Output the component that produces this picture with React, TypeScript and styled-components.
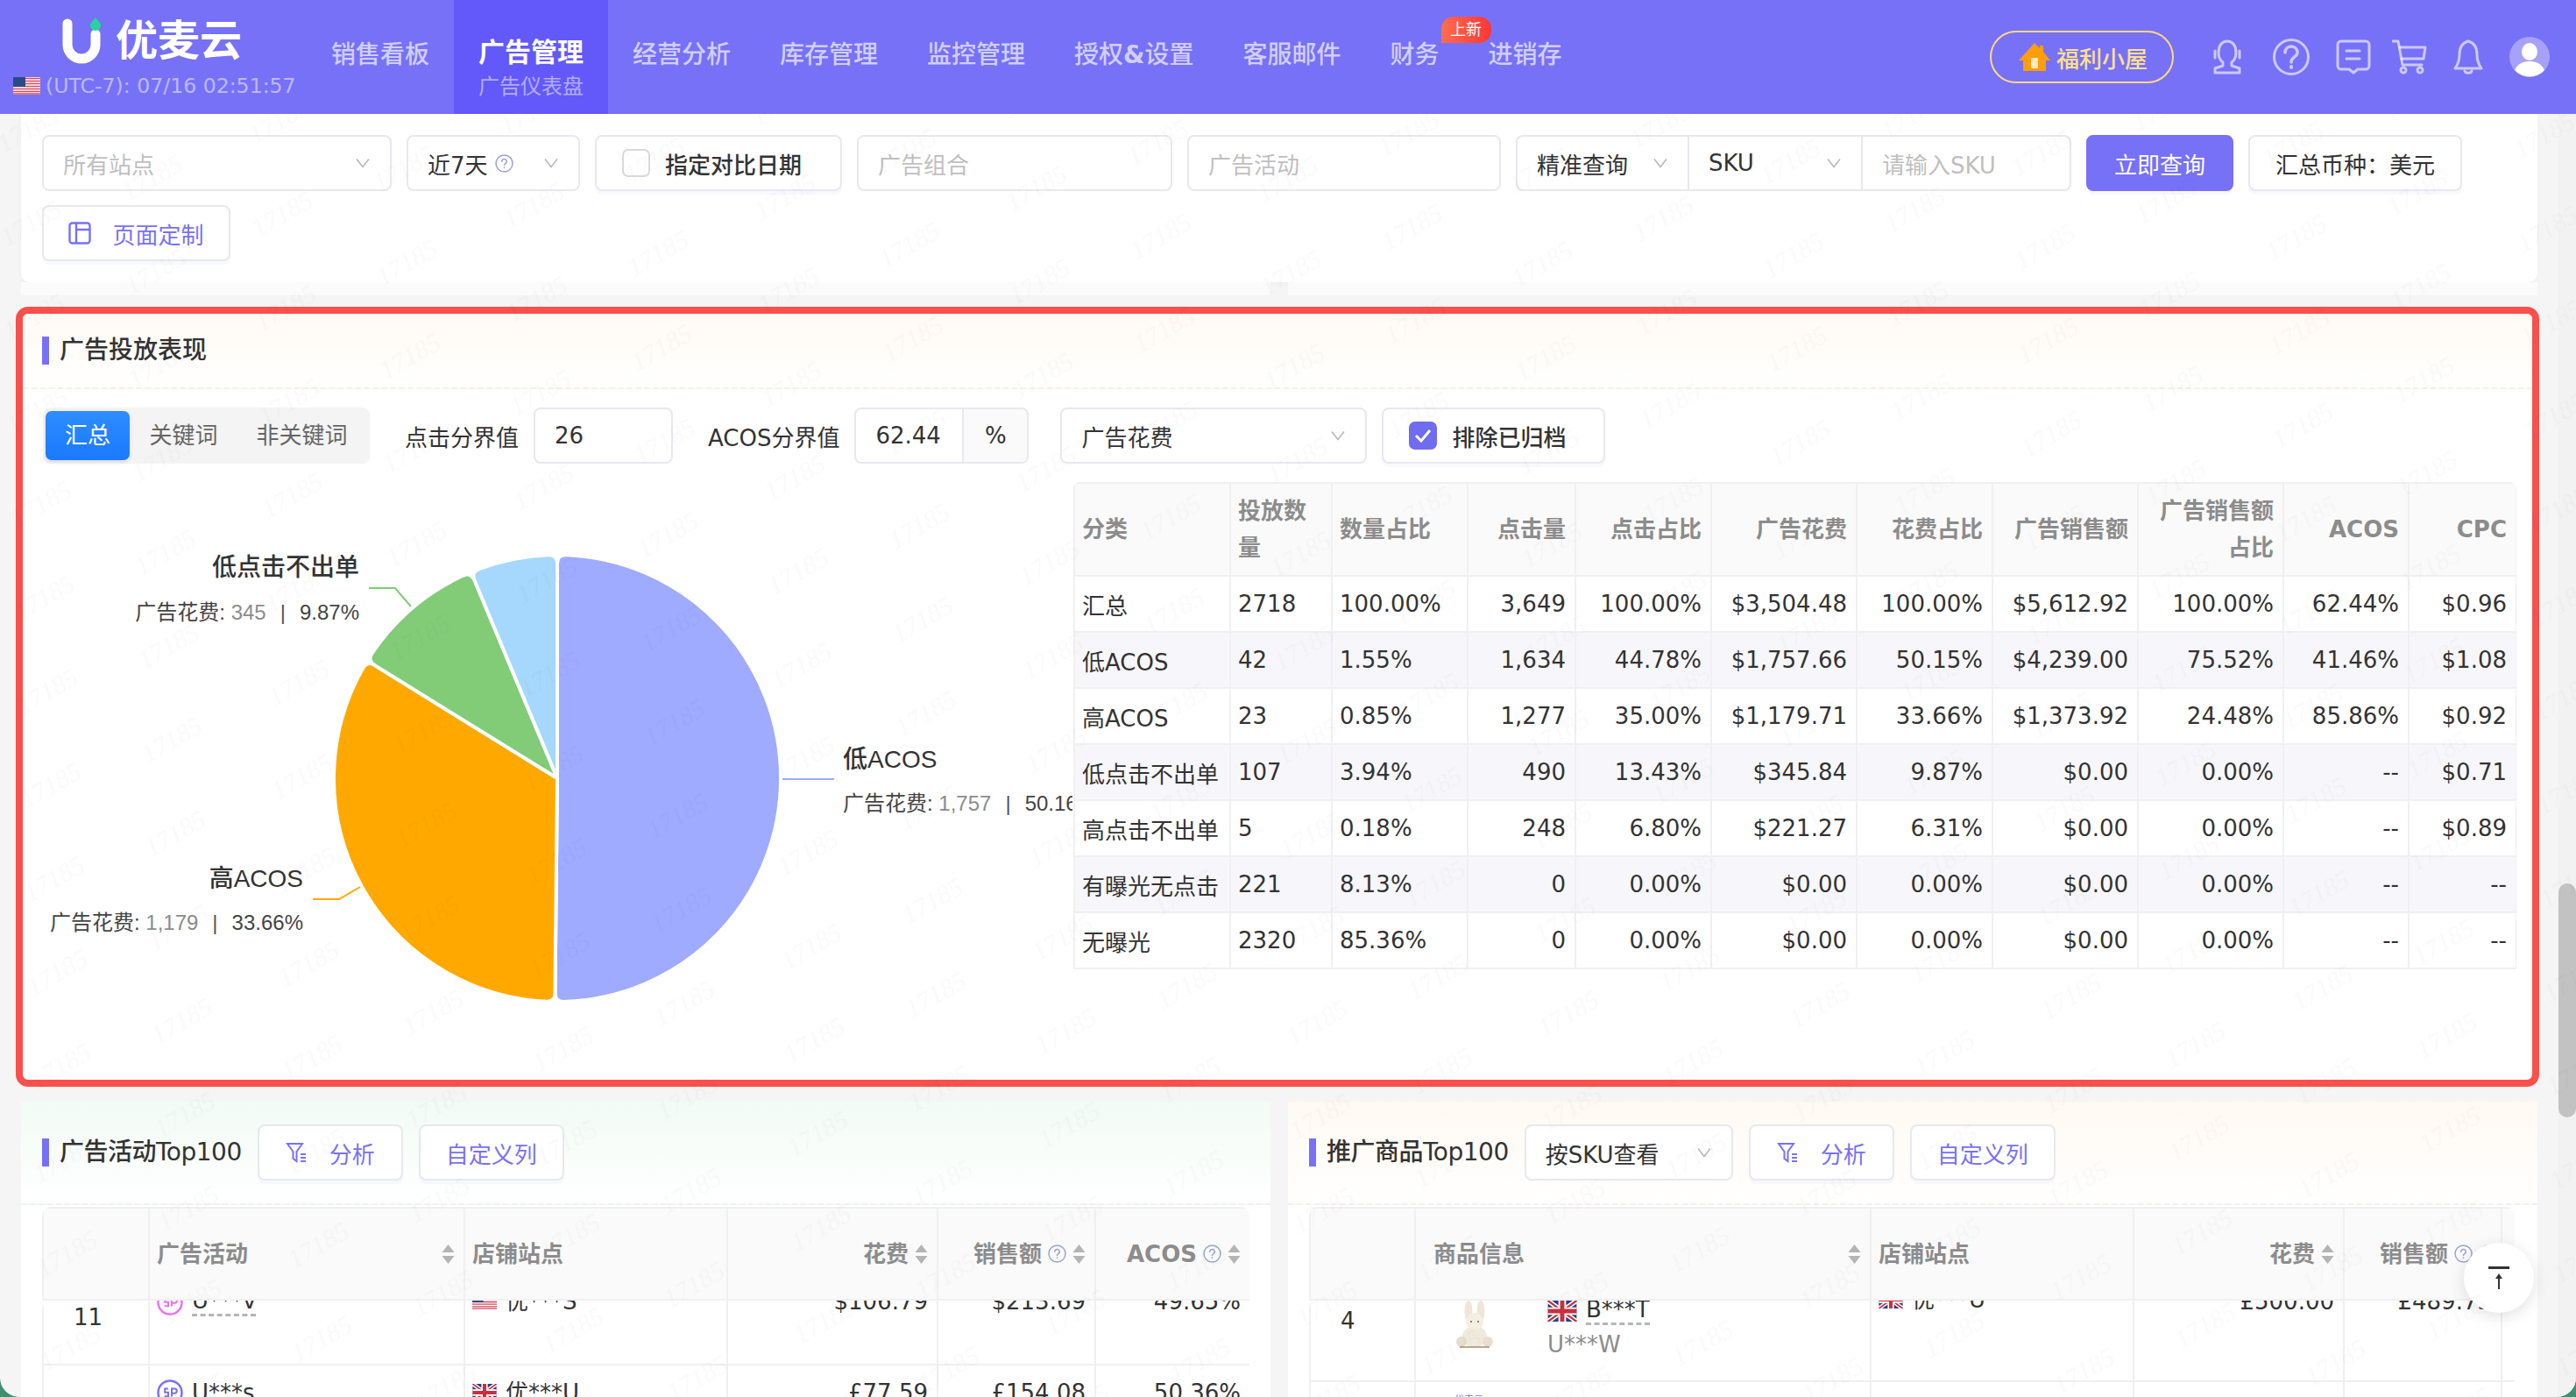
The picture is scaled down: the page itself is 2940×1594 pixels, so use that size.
import React from "react"
import styled, { createGlobalStyle } from "styled-components"

const PURPLE = "#7771f8"
const BORDER = "#e8e8ee"
const LINE = "#f0f0f2"

const GlobalStyle = createGlobalStyle`
  html, body {
    margin: 0;
    padding: 0;
    width: 2940px;
    height: 1594px;
    overflow: hidden;
    background: #3f8f70;
  }
  * { box-sizing: border-box; }
  body {
    font-family: "DejaVu Sans", "Noto Sans CJK SC", sans-serif;
    font-size: 26px;
    color: #333;
  }
`

const Page = styled.div`
  display: flex;
  flex-direction: column;
  width: 2940px;
  height: 1594px;
  overflow: hidden;
  background: #f5f5f6;
  border-radius: 0 0 22px 22px;
`

/* header */
const Header = styled.header`
  display: flex;
  flex: none;
  height: 130px;
  background: ${PURPLE};
  color: #fff;
`

const Brand = styled.div`
  display: flex;
  flex-direction: column;
  flex: none;
  width: 350px;
  padding: 14px 0 0 15px;
`

const LogoRow = styled.div`
  display: flex;
  align-items: center;
  gap: 15px;
  height: 64px;
  margin-left: 56px;
`

const LogoText = styled.span`
  font-size: 48px;
  font-weight: 700;
  line-height: 1;
`

const TimeRow = styled.div`
  display: flex;
  align-items: center;
  gap: 6px;
  margin-top: 6px;
  font-size: 23.6px;
  color: rgba(255, 255, 255, 0.5);
  white-space: nowrap;
`

const Nav = styled.nav`
  display: flex;
`

const NavItem = styled.div<{ $active?: boolean }>`
  position: relative;
  display: flex;
  flex-direction: column;
  align-items: center;
  padding: ${(p) => (p.$active ? "41px" : "44px")} 28px 0;
  background: ${(p) => (p.$active ? "#6359fa" : "transparent")};
  font-size: ${(p) => (p.$active ? "30px" : "28px")};
  font-weight: ${(p) => (p.$active ? 700 : 500)};
  line-height: 38px;
  color: ${(p) => (p.$active ? "#fff" : "rgba(255,255,255,.68)")};
  white-space: nowrap;
`

const NavSub = styled.span`
  margin-top: 4px;
  font-size: 24px;
  font-weight: 400;
  line-height: 32px;
  color: rgba(255, 255, 255, 0.5);
`

const NavLabel = styled.span`
  display: flex;
  align-items: baseline;
`

const Amp = styled.span`
  font-weight: 700;
`

const NewBadge = styled.span`
  position: absolute;
  top: 19px;
  left: 86px;
  width: 57px;
  height: 30px;
  border-radius: 14px 14px 14px 0;
  background: linear-gradient(90deg, #ff6d4f, #ff3636);
  color: #fff;
  font-size: 18px;
  font-weight: 400;
  line-height: 30px;
  text-align: center;
`

const HeaderRight = styled.div`
  display: flex;
  align-items: center;
  gap: 30px;
  margin-left: auto;
  padding: 0 30px 0 0;
  height: 130px;
`

const WelfarePill = styled.div`
  display: flex;
  align-items: center;
  gap: 7px;
  width: 210px;
  height: 60px;
  margin-right: 14px;
  padding-left: 31px;
  border: 2px solid #ffd97a;
  border-radius: 30px;
  color: #ffe08a;
  font-weight: 500;
`

const HeaderIcon = styled.svg<{ $pull?: number }>`
  flex: none;
  display: block;
  margin-right: ${(p) => p.$pull ?? 0}px;
  fill: none;
  stroke: rgba(255, 255, 255, 0.62);
  stroke-width: 3;
  stroke-linecap: round;
  stroke-linejoin: round;
`

/* page body */
const Body = styled.div`
  position: relative;
  display: flex;
  flex: 1;
  min-height: 0;
`

const Main = styled.main`
  flex: none;
  width: 2920px;
  padding-left: 24px;
`

const ScrollTrack = styled.div`
  flex: none;
  width: 20px;
  background: #f2f2f3;
`

const ScrollThumb = styled.div`
  width: 20px;
  height: 267px;
  margin-top: 878px;
  border-radius: 10px;
  background: #c2c2c2;
`

const WatermarkLayer = styled.svg`
  position: absolute;
  inset: 0;
  width: 100%;
  height: 100%;
  pointer-events: none;
`

const WatermarkText = styled.text`
  font-family: "Liberation Serif", serif;
  font-style: italic;
  font-size: 30px;
  fill: rgba(0, 0, 0, 0.018);
`

/* filter card */
const FilterCard = styled.section`
  display: flex;
  flex-wrap: wrap;
  align-content: flex-start;
  gap: 16px 17px;
  width: 2872px;
  height: 192px;
  padding: 24px 24px 0;
  background: #fff;
  border-radius: 0 0 10px 10px;
  box-shadow: 0 2px 6px rgba(0, 0, 0, 0.03);
`

const Field = styled.div<{ $w: number; $muted?: boolean }>`
  display: flex;
  align-items: center;
  flex: none;
  width: ${(p) => p.$w}px;
  height: 64px;
  padding: 0 22px;
  background: #fff;
  border: 2px solid ${BORDER};
  border-radius: 8px;
  color: ${(p) => (p.$muted ? "#bfbfbf" : "#333")};
  white-space: nowrap;
`

const FieldGroup = styled.div`
  display: flex;
  flex: none;

  & > div {
    border-radius: 0;
    border-left-width: 0;
  }
  & > div:first-child {
    border-radius: 8px 0 0 8px;
    border-left-width: 2px;
  }
  & > div:last-child {
    border-radius: 0 8px 8px 0;
  }
`

const Chevron = styled.svg`
  flex: none;
  margin-left: auto;
  fill: none;
  stroke: #b8b8b8;
  stroke-width: 1.6;
`

const HelpGap = styled.span`
  width: 8px;
`

const Button = styled.button<{ $w: number; $primary?: boolean; $accent?: boolean }>`
  display: flex;
  align-items: center;
  justify-content: center;
  gap: 24px;
  flex: none;
  width: ${(p) => p.$w}px;
  height: 64px;
  padding: 0;
  font: inherit;
  background: ${(p) => (p.$primary ? PURPLE : "#fff")};
  border: 2px solid ${(p) => (p.$primary ? PURPLE : BORDER)};
  border-radius: 8px;
  box-shadow: 0 4px 0 rgba(119, 113, 248, 0.05);
  color: ${(p) => (p.$primary ? "#fff" : p.$accent ? PURPLE : "#333")};
  white-space: nowrap;
`

const CheckButton = styled(Button)<{ $left?: number }>`
  justify-content: flex-start;
  gap: 17px;
  margin-left: ${(p) => p.$left ?? 0}px;
  padding-left: 29px;
  font-weight: 500;
`

const CheckBox = styled.span<{ $checked?: boolean }>`
  display: flex;
  align-items: center;
  justify-content: center;
  flex: none;
  width: 32px;
  height: 32px;
  border: 2px solid ${(p) => (p.$checked ? "#6f6cf0" : "#d9d9d9")};
  border-radius: 7px;
  background: ${(p) => (p.$checked ? "#6f6cf0" : "#fff")};
`

const Stubs = styled.div`
  display: flex;
  gap: 20px;
  width: 2872px;
  height: 15px;

  & > div {
    flex: 1;
    background: #fbfbfb;
  }
`

/* performance panel */
const RedPanel = styled.section`
  width: 2880px;
  height: 890px;
  margin: 13px 0 17px -6px;
  background: #fff;
  border: 8px solid #f9504c;
  border-radius: 14px;
  overflow: hidden;
`

const TitleBar = styled.div<{ $tint: string; $h: number; $left: number }>`
  display: flex;
  align-items: center;
  gap: 18px;
  height: ${(p) => p.$h}px;
  padding-left: ${(p) => p.$left}px;
  background: linear-gradient(180deg, ${(p) => p.$tint}, #fff);
  border-bottom: 2px dashed ${(p) => (p.$tint === "#f2fbf5" ? "#eef3f0" : "#f5f0ea")};
`

const Title = styled.h2`
  display: flex;
  align-items: center;
  gap: 12px;
  margin: 0;
  font-size: 28px;
  font-weight: 500;
  line-height: 32px;
  white-space: nowrap;

  &::before {
    content: "";
    width: 8px;
    height: 32px;
    background: ${PURPLE};
  }
`

const CardTitle = styled(Title)`
  letter-spacing: -0.5px;
`

const ControlRow = styled.div`
  display: flex;
  align-items: center;
  height: 64px;
  margin: 21px 0 20px 23px;
`

const Segmented = styled.div`
  display: flex;
  align-items: center;
  width: 373px;
  height: 64px;
  padding: 0 3px;
  background: #f4f4f5;
  border-radius: 8px;
`

const Segment = styled.span<{ $active?: boolean; $w: number }>`
  width: ${(p) => p.$w}px;
  height: 56px;
  border-radius: 7px;
  background: ${(p) => (p.$active ? "linear-gradient(180deg,#2e8dff,#1a79ff)" : "transparent")};
  box-shadow: ${(p) => (p.$active ? "0 2px 5px rgba(0,0,0,.12)" : "none")};
  color: ${(p) => (p.$active ? "#fff" : "#666")};
  line-height: 56px;
  text-align: center;
  white-space: nowrap;
`

const ControlLabel = styled.span<{ $left: number }>`
  flex: none;
  margin: 0 17px 0 ${(p) => p.$left}px;
  white-space: nowrap;
`

const AddonInput = styled.div`
  display: flex;
  flex: none;
  width: 199px;
  height: 64px;
  border: 2px solid ${BORDER};
  border-radius: 8px;
  overflow: hidden;
`

const AddonValue = styled.span`
  flex: 1;
  padding-left: 22px;
  line-height: 60px;
`

const AddonUnit = styled.span`
  width: 74px;
  background: #fafafa;
  border-left: 2px solid ${BORDER};
  line-height: 60px;
  text-align: center;
`

const MetricSelect = styled(Field)`
  margin-left: 36px;
`

const SplitRow = styled.div`
  display: flex;
  align-items: flex-start;
`

const ChartSvg = styled.svg`
  flex: none;
  display: block;
`

const PieLabel = styled.text<{ $end?: boolean }>`
  font-family: "Liberation Sans", "Noto Sans CJK SC", sans-serif;
  font-size: 28px;
  font-weight: 500;
  fill: #333;
  text-anchor: ${(p) => (p.$end ? "end" : "start")};
`

const PieSub = styled.text<{ $end?: boolean }>`
  font-family: "Liberation Sans", "Noto Sans CJK SC", sans-serif;
  font-size: 24px;
  fill: #444;
  text-anchor: ${(p) => (p.$end ? "end" : "start")};

  tspan.value {
    fill: #8c8c8c;
  }
  tspan.sep {
    fill: #555;
    font-weight: 300;
  }
`

/* tables */
const TableFrame = styled.div<{ $w: number; $h?: number; $inset?: boolean }>`
  flex: none;
  width: ${(p) => p.$w}px;
  ${(p) => (p.$h ? `height: ${p.$h}px;` : "")}
  ${(p) => (p.$inset ? "padding: 1px;" : "")}
  overflow: hidden;
  border-radius: 10px 10px 0 0;
`

const Table = styled.table<{ $offset?: number }>`
  width: 100%;
  table-layout: fixed;
  border-collapse: collapse;
  ${(p) => (p.$offset ? `margin-top: ${p.$offset}px;` : "")}
`

const Th = styled.th<{ $right?: boolean; $h?: number }>`
  height: ${(p) => p.$h ?? 106}px;
  padding: 0 10px 0 8px;
  background: #fafafa;
  border: 2px solid ${LINE};
  color: #8c8c8c;
  font-weight: 600;
  font-size: 26px;
  line-height: 42px;
  text-align: ${(p) => (p.$right ? "right" : "left")};
  white-space: normal;
`

const HeadInner = styled.div<{ $spread?: boolean; $right?: boolean; $indent?: number }>`
  display: flex;
  align-items: center;
  gap: 7px;
  padding-left: ${(p) => p.$indent ?? 0}px;
  justify-content: ${(p) => (p.$spread ? "space-between" : p.$right ? "flex-end" : "flex-start")};
  white-space: nowrap;
`

const Td = styled.td<{ $right?: boolean; $striped?: boolean }>`
  height: 64px;
  padding: 0 10px 0 8px;
  background: ${(p) => (p.$striped ? "#f7f7fb" : "#fff")};
  border: 2px solid ${LINE};
  text-align: ${(p) => (p.$right ? "right" : "left")};
  white-space: nowrap;
`

const ListCell = styled.td<{ $index?: boolean; $h: number }>`
  height: ${(p) => p.$h}px;
  padding: 0 10px 0 ${(p) => (p.$index ? "34px" : "8px")};
  background: #fff;
  border: 2px solid ${LINE};
  vertical-align: ${(p) => (p.$index ? "middle" : "top")};
  white-space: nowrap;
`

const CellTop = styled.div<{ $top: number; $right?: boolean }>`
  display: flex;
  align-items: center;
  gap: 10px;
  margin-top: ${(p) => p.$top}px;
  justify-content: ${(p) => (p.$right ? "flex-end" : "flex-start")};
  line-height: 32px;
`

const Masked = styled.span`
  border-bottom: 3px dashed #b5b5b5;
  line-height: 30px;
`

const MutedLine = styled.div`
  margin-top: 6px;
  color: #8c8c8c;
  line-height: 32px;
`

const ProductCell = styled.div`
  display: flex;
  gap: 60px;
  padding: 45px 0 0 36px;
`

const ProductText = styled.div`
  margin-top: -5px;
`

const TinyLogo = styled.span`
  display: block;
  padding: 14px 0 0 36px;
  color: ${PURPLE};
  font-size: 11px;
  line-height: 14px;
`

/* bottom cards */
const CardRow = styled.div`
  display: flex;
  gap: 20px;
  width: 2872px;
`

const ListCard = styled.section`
  flex: 1;
  height: 337px;
  background: #fff;
  overflow: hidden;
`

const CardBody = styled.div`
  padding: 2px 24px 0;
`

const BackTop = styled.div`
  position: absolute;
  top: 1288px;
  left: 2812px;
  display: flex;
  align-items: center;
  justify-content: center;
  width: 80px;
  height: 80px;
  background: #fff;
  border-radius: 50%;
  box-shadow: 0 4px 18px rgba(0, 0, 0, 0.12);
`

const sector = (a0: number, a1: number) => {
  const [cx, cy, r, round] = [636, 889, 255, 10]
  const pt = (a: number, rr: number) => {
    const t = (a * Math.PI) / 180
    return `${(cx + rr * Math.sin(t)).toFixed(1)} ${(cy - rr * Math.cos(t)).toFixed(1)}`
  }
  const da = (round / r) * (180 / Math.PI)
  const large = a1 - a0 - 2 * da > 180 ? 1 : 0
  return `M${cx} ${cy}L${pt(a0, r - round)}Q${pt(a0, r)} ${pt(a0 + da, r)}A${r} ${r} 0 ${large} 1 ${pt(a1 - da, r)}Q${pt(a1, r)} ${pt(a1, r - round)}Z`
}

const slices = [
  { from: 0, to: 180.58, color: "#9eabff" },
  { from: 180.58, to: 301.75, color: "#ffa900" },
  { from: 301.75, to: 337.3, color: "#82cc78" },
  { from: 337.3, to: 360, color: "#a5d8fc" },
]

const perfCols = [178, 116, 155, 123, 155, 166, 155, 166, 166, 143, 123]
const perfHead = ["分类", "投放数量", "数量占比", "点击量", "点击占比", "广告花费", "花费占比", "广告销售额", "广告销售额占比", "ACOS", "CPC"]
const perfRows = [
  ["汇总", "2718", "100.00%", "3,649", "100.00%", "$3,504.48", "100.00%", "$5,612.92", "100.00%", "62.44%", "$0.96"],
  ["低ACOS", "42", "1.55%", "1,634", "44.78%", "$1,757.66", "50.15%", "$4,239.00", "75.52%", "41.46%", "$1.08"],
  ["高ACOS", "23", "0.85%", "1,277", "35.00%", "$1,179.71", "33.66%", "$1,373.92", "24.48%", "85.86%", "$0.92"],
  ["低点击不出单", "107", "3.94%", "490", "13.43%", "$345.84", "9.87%", "$0.00", "0.00%", "--", "$0.71"],
  ["高点击不出单", "5", "0.18%", "248", "6.80%", "$221.27", "6.31%", "$0.00", "0.00%", "--", "$0.89"],
  ["有曝光无点击", "221", "8.13%", "0", "0.00%", "$0.00", "0.00%", "$0.00", "0.00%", "--", "--"],
  ["无曝光", "2320", "85.36%", "0", "0.00%", "$0.00", "0.00%", "$0.00", "0.00%", "--", "--"],
]

const campaignCols = [121, 360, 300, 240, 180, 177]
const productCols = [120, 520, 300, 240, 180, 16]

const ChevronIcon = () => (
  <Chevron width="18" height="12" viewBox="0 0 18 12">
    <path d="M2 1.5l7 9 7-9" />
  </Chevron>
)

const SortGlyph = styled.svg`
  flex: none;
`

const SortIcon = () => (
  <SortGlyph width="15" height="22" viewBox="0 0 15 22">
    <path d="M7.5 0l7 9H.5z M7.5 22l-7-9h14z" fill="#b4b4b4" />
  </SortGlyph>
)

const HelpIcon = () => (
  <SortGlyph width="21" height="21" viewBox="0 0 21 21" fill="none" stroke="#9aa5cc" strokeWidth="1.5">
    <circle cx="10.5" cy="10.5" r="9.5" />
    <path d="M7.8 8.2a2.7 2.7 0 1 1 4 2.3c-.9.6-1.3 1-1.3 2" strokeLinecap="round" />
    <path d="M10.5 15v.6" strokeLinecap="round" />
  </SortGlyph>
)

const FilterIcon = () => (
  <svg width="26" height="24" viewBox="0 0 26 24" fill="none" stroke={PURPLE} strokeWidth="2">
    <path d="M2 2h17l-6.5 9v11l-4-3v-8z" />
    <path d="M17 14h6M17 18h6M17 22h6" />
  </svg>
)

const UkFlag = ({ w = 30, h = 22 }: { w?: number; h?: number }) => (
  <SortGlyph width={w} height={h} viewBox="0 0 30 22">
    <rect width="30" height="22" fill="#27407f" />
    <path d="M0 0l30 22M30 0L0 22" stroke="#fff" strokeWidth="5" />
    <path d="M0 0l30 22M30 0L0 22" stroke="#c8313e" strokeWidth="2" />
    <path d="M15 0v22M0 11h30" stroke="#fff" strokeWidth="8" />
    <path d="M15 0v22M0 11h30" stroke="#c8313e" strokeWidth="4.5" />
  </SortGlyph>
)

const UsFlag = ({ w = 31, h = 20 }: { w?: number; h?: number }) => (
  <SortGlyph width={w} height={h} viewBox="0 0 31 20">
    <rect width="31" height="20" fill="#fff" />
    <path d="M0 1.5h31M0 4.5h31M0 7.5h31M0 10.5h31M0 13.5h31M0 16.5h31M0 19h31" stroke="#d8485a" strokeWidth="1.5" />
    <rect width="14" height="11" fill="#2c4a86" />
  </SortGlyph>
)

const AdTypeIcon = ({ color }: { color: string }) => (
  <SortGlyph width="30" height="30" viewBox="0 0 30 30" fill="none" stroke={color} strokeWidth="2.4">
    <circle cx="15" cy="15" r="13.5" />
    <path d="M13 10.5H9.2v4.2H13v4.6H8.6M17 19.5v-9h3.2a2.6 2.6 0 0 1 0 5.2H17" strokeWidth="2" />
  </SortGlyph>
)

const Rabbit = () => (
  <SortGlyph width="46" height="54" viewBox="0 0 46 54">
    <ellipse cx="16" cy="12" rx="4.5" ry="12" fill="#eee6d8" />
    <ellipse cx="30" cy="12" rx="4.5" ry="12" fill="#eee6d8" />
    <ellipse cx="23" cy="41" rx="14" ry="12" fill="#f0e9dd" />
    <circle cx="23" cy="24" r="10" fill="#f4eee3" />
    <ellipse cx="8" cy="47" rx="6" ry="6" fill="#e8dfd0" />
    <ellipse cx="38" cy="47" rx="6" ry="6" fill="#e8dfd0" />
    <path d="M6 53h34" stroke="#a68b6f" strokeWidth="1.5" />
    <circle cx="19" cy="24" r="1" fill="#6b5d4f" />
    <circle cx="27" cy="24" r="1" fill="#6b5d4f" />
  </SortGlyph>
)

const Head = ({ text, right, sort, help, spread, indent }: { text: string; right?: boolean; sort?: boolean; help?: boolean; spread?: boolean; indent?: number }) => (
  <Th $right={right} $h={105}>
    <HeadInner $right={right} $spread={spread} $indent={indent}>
      <span>{text}</span>
      {help && <HelpIcon />}
      {sort && <SortIcon />}
    </HeadInner>
  </Th>
)

const Cols = ({ widths }: { widths: number[] }) => (
  <colgroup>
    {widths.map((w, i) => (
      <col key={i} width={w} />
    ))}
  </colgroup>
)

const SubLabel = ({ x, y, end, value, pct }: { x: number; y: number; end?: boolean; value: string; pct: string }) => (
  <PieSub $end={end} x={x} y={y}>
    广告花费: <tspan className="value">{value}</tspan>
    <tspan className="sep" dx="16">|</tspan>
    <tspan dx="16">{pct}</tspan>
  </PieSub>
)

export default function App() {
  return (
    <Page>
      <GlobalStyle />
      <Header>
        <Brand>
          <LogoRow>
            <svg width="46" height="54" viewBox="0 0 46 54" fill="none">
              <path d="M6 8v24a16 16 0 0 0 32 0V20" stroke="#fff" strokeWidth="11" strokeLinecap="round" />
              <path d="M38 1c3 3.500 6 6 6 9a6 6 0 0 1-12 0c0-3 3-5.500 6-9z" fill="#27d3a0" />
            </svg>
            <LogoText>优麦云</LogoText>
          </LogoRow>
          <TimeRow>
            <UsFlag />
            (UTC-7): 07/16 02:51:57
          </TimeRow>
        </Brand>
        <Nav>
          <NavItem>销售看板</NavItem>
          <NavItem $active>
            广告管理
            <NavSub>广告仪表盘</NavSub>
          </NavItem>
          <NavItem>经营分析</NavItem>
          <NavItem>库存管理</NavItem>
          <NavItem>监控管理</NavItem>
          <NavItem>
            <NavLabel>
              授权<Amp>&amp;</Amp>设置
            </NavLabel>
          </NavItem>
          <NavItem>客服邮件</NavItem>
          <NavItem>
            财务
            <NewBadge>上新</NewBadge>
          </NavItem>
          <NavItem>进销存</NavItem>
        </Nav>
        <HeaderRight>
          <WelfarePill>
            <svg width="36" height="32" viewBox="0 0 36 32">
              <path d="M18 0l6 6V3h4v7l8 10h-5v12H5V20H0z" fill="#ff9d0a" />
              <rect x="14" y="17" width="8" height="12" rx="1" fill="#ffe9c0" />
            </svg>
            福利小屋
          </WelfarePill>
          <HeaderIcon width="39" height="40" viewBox="0 0 39 40">
            <path d="M7 15C7 7 11 2 17 2s10 5 10 13c0 5-2 9-5 11v4l9 3v5H3v-5l9-3v-4c-3-2-5-6-5-11z" />
            <path d="M3 13v8M31 13v8" />
          </HeaderIcon>
          <HeaderIcon width="42" height="42" viewBox="0 0 42 42">
            <circle cx="21" cy="21" r="19.500" />
            <path d="M14 16c0-4 3-7 7-7s7 3 7 7c0 5-7 5-7 11" strokeWidth="3.500" />
            <path d="M21 32v1" strokeWidth="4" />
          </HeaderIcon>
          <HeaderIcon $pull={-6} width="40" height="40" viewBox="0 0 40 40">
            <path d="M6 2h28a4 4 0 0 1 4 4v24a4 4 0 0 1-4 4h-9l-5 4-5-4H6a4 4 0 0 1-4-4V6a4 4 0 0 1 4-4z" />
            <path d="M12 13h15M12 22h15" />
          </HeaderIcon>
          <HeaderIcon width="40" height="40" viewBox="0 0 40 40">
            <path d="M1 2h6l5 27h22" />
            <path d="M9 9h29l-2 13H11" />
            <circle cx="13" cy="35" r="3" />
            <circle cx="32" cy="35" r="3" />
          </HeaderIcon>
          <HeaderIcon width="34" height="40" viewBox="0 0 34 40">
            <path d="M17 2c-7 2-10 8-10 15 0 7-2 12-5 16h30c-3-4-5-9-5-16 0-7-3-13-10-15z" />
            <path d="M13 36c1 3 7 3 8 0" />
          </HeaderIcon>
          <svg width="46" height="46" viewBox="0 0 46 46">
            <circle cx="23" cy="23" r="23" fill="rgba(255,255,255,.35)" />
            <ellipse cx="23" cy="17" rx="9" ry="10" fill="#fff" />
            <path d="M6 38c4-8 10-10 17-10s13 2 17 10a23 23 0 0 1-34 0z" fill="#fff" />
          </svg>
        </HeaderRight>
      </Header>

      <Body>
        <Main>
          <FilterCard>
            <Field $w={399} $muted>
              所有站点
              <ChevronIcon />
            </Field>
            <Field $w={198}>
              近7天
              <HelpGap />
              <HelpIcon />
              <ChevronIcon />
            </Field>
            <CheckButton $w={282}>
              <CheckBox />
              指定对比日期
            </CheckButton>
            <Field $w={360} $muted>广告组合</Field>
            <Field $w={358} $muted>广告活动</Field>
            <FieldGroup>
              <Field $w={198}>
                精准查询
                <ChevronIcon />
              </Field>
              <Field $w={198}>
                SKU
                <ChevronIcon />
              </Field>
              <Field $w={238} $muted>请输入SKU</Field>
            </FieldGroup>
            <Button $w={168} $primary>立即查询</Button>
            <Button $w={244}>汇总币种：美元</Button>
            <Button $w={215} $accent>
              <svg width="26" height="26" viewBox="0 0 26 26" fill="none" stroke={PURPLE} strokeWidth="2.4">
                <rect x="1.500" y="1.500" width="23" height="23" rx="3" />
                <path d="M9 2v22M9 9h15" />
              </svg>
              页面定制
            </Button>
          </FilterCard>
          <Stubs>
            <div />
            <div />
          </Stubs>

          <RedPanel>
            <TitleBar $tint="#fffaf3" $h={86} $left={22}>
              <Title>广告投放表现</Title>
            </TitleBar>
            <ControlRow>
              <Segmented>
                <Segment $active $w={96}>汇总</Segment>
                <Segment $w={123}>关键词</Segment>
                <Segment $w={147}>非关键词</Segment>
              </Segmented>
              <ControlLabel $left={40}>点击分界值</ControlLabel>
              <Field $w={159}>26</Field>
              <ControlLabel $left={40}>ACOS分界值</ControlLabel>
              <AddonInput>
                <AddonValue>62.44</AddonValue>
                <AddonUnit>%</AddonUnit>
              </AddonInput>
              <MetricSelect $w={350}>
                广告花费
                <ChevronIcon />
              </MetricSelect>
              <CheckButton $w={255} $left={17}>
                <CheckBox $checked>
                  <svg width="20" height="16" viewBox="0 0 20 16" fill="none" stroke="#fff" strokeWidth="3">
                    <path d="M2 8l6 6L18 2" />
                  </svg>
                </CheckBox>
                排除已归档
              </CheckButton>
            </ControlRow>
            <SplitRow>
              <ChartSvg width="1198" height="640" viewBox="26 550 1198 640">
                {slices.map((s) => (
                  <path key={s.from} d={sector(s.from, s.to)} fill={s.color} stroke="#fff" strokeWidth="4" strokeLinejoin="round" />
                ))}
                <path d="M893 890h59" stroke="#9eabff" strokeWidth="2" fill="none" />
                <path d="M421 672h30l18 21" stroke="#82cc78" strokeWidth="2" fill="none" />
                <path d="M357 1027h30l24-14" stroke="#ffa900" strokeWidth="2" fill="none" />
                <PieLabel x="962" y="877">低ACOS</PieLabel>
                <SubLabel x={962} y={926} value="1,757" pct="50.16%" />
                <PieLabel $end x="410" y="658">低点击不出单</PieLabel>
                <SubLabel end x={410} y={708} value="345" pct="9.87%" />
                <PieLabel $end x="346" y="1013">高ACOS</PieLabel>
                <SubLabel end x={346} y={1062} value="1,179" pct="33.66%" />
              </ChartSvg>
              <TableFrame $w={1648} $inset>
                <Table>
                  <Cols widths={perfCols} />
                  <thead>
                    <tr>
                      {perfHead.map((h, i) => (
                        <Th key={h} $right={i > 2}>{h}</Th>
                      ))}
                    </tr>
                  </thead>
                  <tbody>
                    {perfRows.map((row, r) => (
                      <tr key={r}>
                        {row.map((c, i) => (
                          <Td key={i} $right={i > 2} $striped={r % 2 === 1}>{c}</Td>
                        ))}
                      </tr>
                    ))}
                  </tbody>
                </Table>
              </TableFrame>
            </SplitRow>
          </RedPanel>

          <CardRow>
            <ListCard>
              <TitleBar $tint="#f2fbf5" $h={118} $left={24}>
                <CardTitle>广告活动Top100</CardTitle>
                <Button $w={166} $accent>
                  <FilterIcon />
                  分析
                </Button>
                <Button $w={166} $accent>自定义列</Button>
              </TitleBar>
              <CardBody>
                <TableFrame $w={1378} $h={219}>
                  <Table>
                    <Cols widths={campaignCols} />
                    <thead>
                      <tr>
                        <Head text="" />
                        <Head text="广告活动" sort spread />
                        <Head text="店铺站点" />
                        <Head text="花费" right sort />
                        <Head text="销售额" right sort help />
                        <Head text="ACOS" right sort help />
                      </tr>
                    </thead>
                  </Table>
                  <TableFrame $w={1378} $h={114}>
                    <Table $offset={-36}>
                      <Cols widths={campaignCols} />
                      <tbody>
                        <tr>
                          <ListCell $h={108} $index>11</ListCell>
                          <ListCell $h={108}>
                            <CellTop $top={19}><AdTypeIcon color="#f36ef0" /><Masked>U***v</Masked></CellTop>
                          </ListCell>
                          <ListCell $h={108}>
                            <CellTop $top={19}><UsFlag w={28} h={20} />优***S</CellTop>
                          </ListCell>
                          <ListCell $h={108}><CellTop $top={19} $right>$106.79</CellTop></ListCell>
                          <ListCell $h={108}><CellTop $top={19} $right>$213.69</CellTop></ListCell>
                          <ListCell $h={108}><CellTop $top={19} $right>49.65%</CellTop></ListCell>
                        </tr>
                        <tr>
                          <ListCell $h={108} />
                          <ListCell $h={108}>
                            <CellTop $top={15}><AdTypeIcon color="#7771f8" />U***s</CellTop>
                          </ListCell>
                          <ListCell $h={108}>
                            <CellTop $top={15}><UkFlag w={28} h={20} />优***U</CellTop>
                          </ListCell>
                          <ListCell $h={108}><CellTop $top={15} $right>£77.59</CellTop></ListCell>
                          <ListCell $h={108}><CellTop $top={15} $right>£154.08</CellTop></ListCell>
                          <ListCell $h={108}><CellTop $top={15} $right>50.36%</CellTop></ListCell>
                        </tr>
                      </tbody>
                    </Table>
                  </TableFrame>
                </TableFrame>
              </CardBody>
            </ListCard>

            <ListCard>
              <TitleBar $tint="#fff9f2" $h={118} $left={24}>
                <CardTitle>推广商品Top100</CardTitle>
                <Field $w={238}>
                  按SKU查看
                  <ChevronIcon />
                </Field>
                <Button $w={166} $accent>
                  <FilterIcon />
                  分析
                </Button>
                <Button $w={166} $accent>自定义列</Button>
              </TitleBar>
              <CardBody>
                <TableFrame $w={1376} $h={219}>
                  <Table>
                    <Cols widths={productCols} />
                    <thead>
                      <tr>
                        <Head text="" />
                        <Head text="商品信息" sort spread indent={12} />
                        <Head text="店铺站点" />
                        <Head text="花费" right sort />
                        <Head text="销售额" right sort help />
                        <Head text="" />
                      </tr>
                    </thead>
                  </Table>
                  <TableFrame $w={1376} $h={114}>
                    <Table $offset={-47}>
                      <Cols widths={productCols} />
                      <tbody>
                        <tr>
                          <ListCell $h={138} $index>4</ListCell>
                          <ListCell $h={138}>
                            <ProductCell>
                              <Rabbit />
                              <ProductText>
                                <CellTop $top={0}>
                                  <UkFlag w={34} h={24} />
                                  <Masked>B***T</Masked>
                                </CellTop>
                                <MutedLine>U***W</MutedLine>
                              </ProductText>
                            </ProductCell>
                          </ListCell>
                          <ListCell $h={138}>
                            <CellTop $top={28}><UkFlag w={28} h={20} />优***U</CellTop>
                          </ListCell>
                          <ListCell $h={138}><CellTop $top={30} $right>£500.00</CellTop></ListCell>
                          <ListCell $h={138}><CellTop $top={30} $right>£489.75</CellTop></ListCell>
                          <ListCell $h={138} />
                        </tr>
                        <tr>
                          <ListCell $h={100} />
                          <ListCell $h={100}><TinyLogo>优麦云</TinyLogo></ListCell>
                          <ListCell $h={100} />
                          <ListCell $h={100} />
                          <ListCell $h={100} />
                          <ListCell $h={100} />
                        </tr>
                      </tbody>
                    </Table>
                  </TableFrame>
                </TableFrame>
              </CardBody>
            </ListCard>
          </CardRow>
        </Main>
        <ScrollTrack>
          <ScrollThumb />
        </ScrollTrack>
        <BackTop>
          <svg width="26" height="26" viewBox="0 0 26 26" fill="#333">
            <rect x="1" y="0" width="24" height="3" />
            <path d="M13 8l4 6h-3v12h-2V14H9z" />
          </svg>
        </BackTop>
        <WatermarkLayer>
          <defs>
            <pattern id="wm" width="287" height="107" patternUnits="userSpaceOnUse" patternTransform="translate(1265 113) rotate(-2)">
              <WatermarkText transform="translate(60 30) rotate(-28)" x="-38" y="8">17185</WatermarkText>
              <WatermarkText transform="translate(207 77) rotate(-28)" x="-38" y="8">17185</WatermarkText>
            </pattern>
          </defs>
          <rect width="100%" height="100%" fill="url(#wm)" />
        </WatermarkLayer>
      </Body>
    </Page>
  )
}
